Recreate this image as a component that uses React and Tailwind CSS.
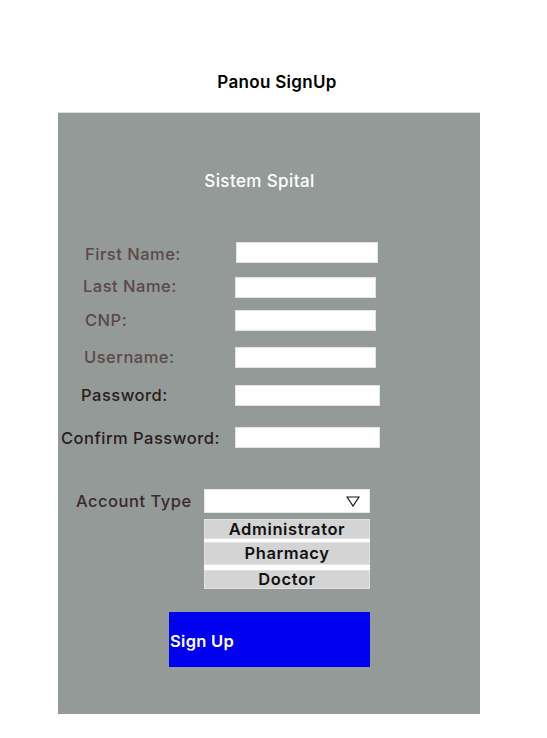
const font = { fontFamily: "Inter, 'Noto Sans', sans-serif" };

const fields = [
  { label: "First Name:", pl: "pl-[27px] pt-[4px]", w: "w-[142px]", il: "w-[178px]", mt: "mt-[49px]", tone: "text-[#5c4848]" },
  { label: "Last Name:", pl: "pl-[25px] pb-[3px]", w: "w-[141px]", il: "w-[177px]", mt: "mt-[14px]", tone: "text-[#5c4848]" },
  { label: "CNP:", pl: "pl-[27px]", w: "w-[141px]", il: "w-[177px]", mt: "mt-[12px]", tone: "text-[#5c4848]" },
  { label: "Username:", pl: "pl-[26px]", w: "w-[141px]", il: "w-[177px]", mt: "mt-[16px]", tone: "text-[#5c4848]" },
  { label: "Password:", pl: "pl-[23px]", w: "w-[145px]", il: "w-[177px]", mt: "mt-[17px]", tone: "text-[#2a1c1c]" },
  { label: "Confirm Password:", pl: "pl-[3px] pt-[2px]", w: "w-[145px]", il: "w-[177px]", mt: "mt-[21px]", tone: "text-[#2a1c1c]" },
];

const FieldRow = ({ field }) => (
  <div className={`flex items-center h-[21px] ${field.mt}`}>
    <div className={`${field.il} shrink-0 ${field.pl}`}>
      <label className={`text-[16.5px] font-medium tracking-[0.5px] whitespace-nowrap ${field.tone}`}>
        {field.label}
      </label>
    </div>
    <input
      type="text"
      className={`${field.w} h-[21px] bg-white border border-[#e4e4e4] outline-none`}
    />
  </div>
);

const options = [
  { label: "Administrator", h: "h-[20px]" },
  { label: "Pharmacy", h: "h-[23px]" },
  { label: "Doctor", h: "h-[19px]" },
];

export default function App() {
  return (
    <div className="w-[547px] h-[738px] bg-white" style={font}>
      <div className="pt-[71px] h-[112px] text-center">
        <h1 className="text-[17px] font-semibold text-black leading-[22px] tracking-[0.3px] pl-[7px]">
          Panou SignUp
        </h1>
      </div>
      <div className="ml-[58px] w-[422px] h-[602px] bg-[#939a98] border-t border-[#dcdedd]">
        <div className="pt-[56px] text-center">
          <h2 className="text-[17px] font-medium text-white leading-[24px] tracking-[0.4px] pr-[19px]">
            Sistem Spital
          </h2>
        </div>

        {fields.map((field) => (
          <FieldRow key={field.label} field={field} />
        ))}

        {/* Account type */}
        <div className="flex items-center h-[24px] mt-[41px]">
          <div className="w-[146px] shrink-0 pl-[18px]">
            <span className="text-[16.5px] font-medium tracking-[0.5px] text-[#3a2a2a] whitespace-nowrap">
              Account Type
            </span>
          </div>
          <div className="w-[166px] h-[24px] bg-white border border-[#e8e8e8] flex items-center justify-end pr-[9px]">
            <svg width="14" height="11" viewBox="0 0 14 11">
              <polygon points="1,1 13,1 7,10" fill="none" stroke="#111" strokeWidth="1.2" />
            </svg>
          </div>
        </div>
        <div className="ml-[146px] mt-[6px] w-[166px] bg-white flex flex-col gap-[3px]">
          {options.map((o, i) => (
            <div
              key={o.label}
              className={`${o.h} ${i === 2 ? "mt-[2px]" : ""} bg-[#d4d4d4] border border-[#e2e2e2] flex items-center justify-center text-[16.5px] font-semibold tracking-[0.6px] text-[#111]`}
            >
              {o.label}
            </div>
          ))}
        </div>

        <button
          type="button"
          className="ml-[111px] mt-[23px] w-[201px] h-[55px] bg-[#0000f0] text-white text-[16.5px] font-semibold tracking-[0.3px] text-left pl-[1px] pt-[3px] flex items-center"
        >
          Sign Up
        </button>
      </div>
    </div>
  );
}
